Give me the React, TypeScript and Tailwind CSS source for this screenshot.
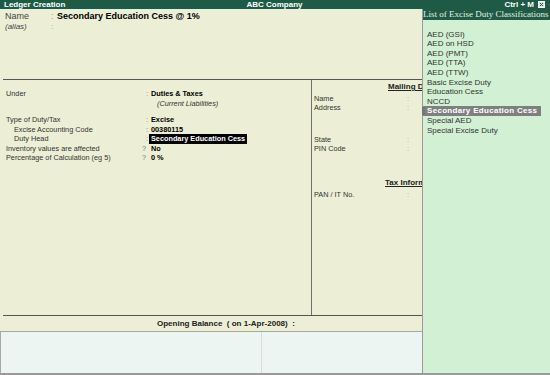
import React from 'react';

const CLASSIFICATIONS = [
  'AED (GSI)',
  'AED on HSD',
  'AED (PMT)',
  'AED (TTA)',
  'AED (TTW)',
  'Basic Excise Duty',
  'Education Cess',
  'NCCD',
  'Secondary Education Cess',
  'Special AED',
  'Special Excise Duty',
];

const SELECTED = 'Secondary Education Cess';

const Row: React.FC<{
  label: string;
  sep?: string;
  indent?: boolean;
  children?: React.ReactNode;
  className?: string;
}> = ({ label, sep = ':', indent, children, className = '' }) => (
  <div className={`flex h-[9.5px] leading-[9.5px] ${className}`}>
    <span className={`w-[136px] shrink-0 ${indent ? 'pl-[9px]' : 'pl-[1px]'}`}>{label}</span>
    <span className={`w-[10px] shrink-0 text-[#777] ${sep === '?' ? 'pl-[1px]' : 'pl-[5px]'}`}>{sep}</span>
    <span className="font-bold text-black whitespace-nowrap">{children}</span>
  </div>
);

const MailRow: React.FC<{ label: string; className?: string }> = ({ label, className = '' }) => (
  <div className={`flex h-[9px] leading-[9px] pl-[2px] ${className}`}>
    <span className="w-[93px] shrink-0">{label}</span>
    <span className="text-[#aaa]">:</span>
  </div>
);

export default function App() {
  return (
    <div className="w-[550px] h-[375px] overflow-hidden flex flex-col bg-[#ecefd5] font-['Liberation_Sans',Arial,sans-serif] text-[#333]">
      {/* Title bar */}
      <div className="h-[9px] shrink-0 bg-[#1e5a45] text-white text-[8px] font-bold leading-[9px] flex items-center px-[4px]">
        <span className="flex-1 whitespace-nowrap">Ledger Creation</span>
        <span className="flex-1 text-center whitespace-nowrap">ABC Company</span>
        <span className="flex-1 flex justify-end items-center gap-[4px] whitespace-nowrap pr-[1px]">
          Ctrl + M
          <svg width="7" height="7" viewBox="0 0 7 7">
            <rect x="0.5" y="0.5" width="6" height="6" fill="#d9e3de" stroke="#f4f4f4" />
            <path d="M2 2 L5 5 M5 2 L2 5" stroke="#1e5a45" strokeWidth="1" />
          </svg>
        </span>
      </div>

      <div className="flex flex-1 min-h-0">
        {/* Main ledger form */}
        <div className="w-[422px] shrink-0 flex flex-col">
          {/* Name / alias */}
          <div className="h-[70px] pl-[5px] pt-[2px]">
            <div className="flex h-[11px] leading-[11px] text-[9px]">
              <span className="w-[46px] text-[#444]">Name</span>
              <span className="w-[6px] text-[#999]">:</span>
              <span className="font-bold text-black">Secondary Education Cess @ 1%</span>
            </div>
            <div className="flex h-[9px] leading-[9px] text-[8px] italic">
              <span className="w-[46px] text-[#444]">(alias)</span>
              <span className="text-[#999] not-italic">:</span>
            </div>
          </div>

          {/* Details */}
          <div className="pl-[3px] h-[237px]">
            <div className="h-full border-y border-[#555] flex text-[7.3px]">
              <div className="w-[308px] shrink-0 pl-[2px] pt-[8.5px]">
                <Row label="Under">Duties &amp; Taxes</Row>
                <div className="h-[9.5px] leading-[9.5px] mt-[1px] pl-[152px] italic text-[#333]">(Current Liabilities)</div>
                <Row label="Type of Duty/Tax" className="mt-[6.75px]">Excise</Row>
                <Row label="Excise Accounting Code" indent>00380115</Row>
                <Row label="Duty Head" indent>
                  <span className="bg-black text-white px-[2px] ml-[-2px] inline-block h-[9.5px]">Secondary Education Cess</span>
                </Row>
                <Row label="Inventory values are affected" sep="?">No</Row>
                <Row label="Percentage of Calculation (eg 5)" sep="?">0 %</Row>
              </div>

              <div className="flex-1 border-l border-[#707070] overflow-hidden">
                <div className="h-[10px] leading-[10px] mt-[2px] pl-[76px] text-[8px] font-bold text-[#222] underline whitespace-nowrap">
                  Mailing Details
                </div>
                <MailRow label="Name" className="mt-[2px]" />
                <MailRow label="Address" />
                <MailRow label="State" className="mt-[22.5px]" />
                <MailRow label="PIN Code" />
                <div className="h-[10px] leading-[10px] mt-[25.5px] pl-[73px] text-[8px] font-bold text-[#222] underline whitespace-nowrap">
                  Tax Information
                </div>
                <MailRow label="PAN / IT No." className="mt-[2px]" />
              </div>
            </div>
          </div>

          {/* Opening balance */}
          <div className="h-[15px] leading-[15px] pl-[157px] text-[8px] font-bold text-[#222] whitespace-pre">
            Opening Balance  ( on 1-Apr-2008)  :
          </div>
          <div className="flex-1 flex border-t border-l border-[#a8a8a8] bg-[#edf5f3]">
            <div className="w-[261px] border-r border-[#d9dcdb]" />
            <div className="flex-1" />
          </div>
        </div>

        {/* List of classifications */}
        <div className="flex-1 flex flex-col border-l border-[#9a9a9a] relative">
          <div className="h-[11px] shrink-0 bg-[#1e5a45] text-[#e6efe3] text-[9px] leading-[11px] font-['Liberation_Serif',serif] whitespace-nowrap overflow-hidden">
            List of Excise Duty Classifications
          </div>
          <div className="flex-1 bg-[#d2f0d3] pt-[9.7px] text-[8px] text-[#333]">
            {CLASSIFICATIONS.map((item) =>
              item === SELECTED ? (
                <div
                  key={item}
                  className="h-[9.6px] leading-[9.6px] mr-[9px] pl-[4px] bg-[#7f7f7f] text-white font-bold tracking-[0.3px] whitespace-nowrap"
                >
                  {item}
                </div>
              ) : (
                <div key={item} className="h-[9.6px] leading-[9.6px] pl-[4px] whitespace-nowrap">
                  {item}
                </div>
              )
            )}
          </div>
          <div className="absolute left-[-1px] top-[98px] w-[3px] h-[8px] bg-[#777]" />
        </div>
      </div>

      <div className="h-[2px] shrink-0 bg-[#9a9a9a]" />
    </div>
  );
}
